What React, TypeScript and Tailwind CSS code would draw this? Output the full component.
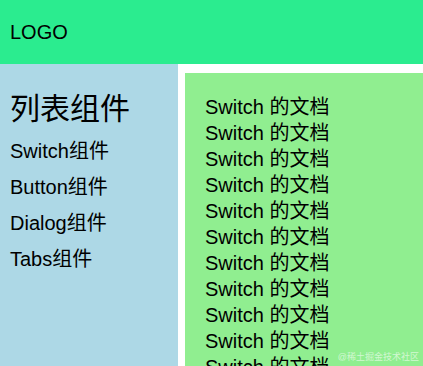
import React from "react";

const font = { fontFamily: '"Liberation Sans", Arial, "Noto Sans CJK SC", sans-serif' };

const menus = ["Switch组件", "Button组件", "Dialog组件", "Tabs组件"];

function App() {
  const lines = Array.from({ length: 14 }, () => "Switch 的文档");

  return (
    <div
      className="relative h-[366px] w-[423px] overflow-hidden bg-white text-black flex flex-col"
      style={font}
    >
      <header className="h-16 shrink-0 bg-[#2bec8f] flex items-center px-[10px] text-[20px]">
        LOGO
      </header>
      <div className="flex flex-1 min-h-0">
        <aside className="w-[178px] shrink-0 bg-[#add8e6] px-[10px] pt-[28px]">
          <h2 className="text-[30px] leading-[34px] mb-[12px]">列表组件</h2>
          <ol>
            {menus.map((m) => (
              <li key={m} className="text-[20px] leading-[26px] mb-[10px]">
                {m}
              </li>
            ))}
          </ol>
        </aside>
        <main className="flex-1 ml-[7px] mt-[9px] bg-[#90ee90] pl-5 pt-[21px] overflow-hidden">
          {lines.map((l, i) => (
            <div key={i} className="text-[20px] leading-[26px]">
              {l}
            </div>
          ))}
        </main>
      </div>
      {/* 掘金水印 */}
      <span className="absolute right-[4px] bottom-[2px] text-[9px] text-white/60">
        @稀土掘金技术社区
      </span>
    </div>
  );
}

export default App;
